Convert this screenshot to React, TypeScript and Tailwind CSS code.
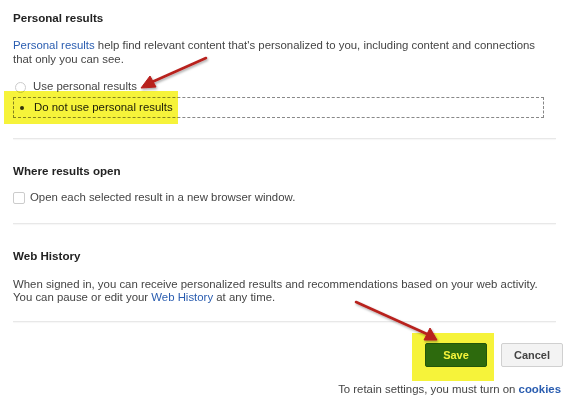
import React from "react";

function Divider() {
  return <div className="h-px bg-[#e8e8e8] mr-[10px] shadow-[0_1px_1px_rgba(0,0,0,0.04)]" />;
}

export default function App() {
  return (
    <div className="relative w-[566px] h-[399px] bg-white overflow-hidden text-[11.4px] text-[#444] font-['Liberation_Sans',Arial,sans-serif]">
      <div className="pl-[13px] pt-[10px]">
        <div className="font-bold text-[#222] text-[11.6px] leading-[16px]">Personal results</div>
        <div className="mt-[12px] leading-[14px] whitespace-nowrap">
          <span className="text-[#2a5db0]">Personal results</span> help find relevant content that's personalized to you, including content and connections
          <br />
          that only you can see.
        </div>
        <div className="mt-[13px] flex items-center h-[16px] gap-[7px]">
          <span className="ml-[2px] w-[11px] h-[11px] rounded-full border border-[#ccc] bg-white" />
          <span>Use personal results</span>
        </div>
        <div className="mt-[2px] mr-[22px] h-[21px] border border-dashed border-[#888] flex items-center gap-[7px]">
          <span className="ml-[2px] w-[11px] h-[11px] rounded-full flex items-center justify-center">
            <span className="w-[4px] h-[4px] rounded-full bg-[#333]" />
          </span>
          <span className="text-[#222]">Do not use personal results</span>
        </div>
        <div className="mt-[20px]">
          <Divider />
        </div>
        <div className="mt-[24px] font-bold text-[#222] text-[11.6px] leading-[16px]">Where results open</div>
        <div className="mt-[11px] flex items-center h-[16px] gap-[5px]">
          <span className="w-[12px] h-[12px] border border-[#ccc] rounded-[2px] bg-white" />
          <span>Open each selected result in a new browser window.</span>
        </div>
        <div className="mt-[17px]">
          <Divider />
        </div>
        <div className="mt-[24px] font-bold text-[#222] text-[11.6px] leading-[16px]">Web History</div>
        <div className="mt-[14px] leading-[13px] whitespace-nowrap">
          When signed in, you can receive personalized results and recommendations based on your web activity.
          <br />
          You can pause or edit your <span className="text-[#2a5db0]">Web History</span> at any time.
        </div>
        <div className="mt-[17px]">
          <Divider />
        </div>
        <div className="mt-[21px] flex justify-end gap-[14px] pr-[3px]">
          <button className="w-[62px] h-[24px] bg-[#2e6f36] border border-[#245a2a] rounded-[2px] text-white font-bold text-[11px]">
            Save
          </button>
          <button className="w-[62px] h-[24px] bg-[#f3f3f3] border border-[#d0d0d0] rounded-[2px] text-[#444] font-bold text-[11px]">
            Cancel
          </button>
        </div>
        <div className="mt-[15px] text-right pr-[5px] leading-[14px]">
          To retain settings, you must turn on <span className="text-[#2a5db0] font-bold">cookies</span>
        </div>
      </div>

      {/* yellow highlights */}
      <div className="absolute left-[4px] top-[91px] w-[174px] h-[33px] bg-[#f6f33a] mix-blend-multiply" />
      <div className="absolute left-[412px] top-[333px] w-[82px] h-[48px] bg-[#f6f33a] mix-blend-multiply" />

      {/* arrows */}
      <svg className="absolute left-0 top-0 pointer-events-none" width="566" height="399">
        <defs>
          <filter id="sh" x="-20%" y="-20%" width="140%" height="140%">
            <feDropShadow dx="1" dy="1.5" stdDeviation="1.2" floodColor="#000" floodOpacity="0.35" />
          </filter>
        </defs>
        <g filter="url(#sh)" fill="#b8201f" stroke="#b8201f">
          <line x1="206" y1="58" x2="152" y2="82" strokeWidth="2.5" strokeLinecap="round" />
          <polygon points="141,88 150,76 156,87" strokeWidth="1" />
          <line x1="356" y1="302" x2="427" y2="334" strokeWidth="2.5" strokeLinecap="round" />
          <polygon points="437,340 424,340 430,328" strokeWidth="1" />
        </g>
      </svg>
    </div>
  );
}
